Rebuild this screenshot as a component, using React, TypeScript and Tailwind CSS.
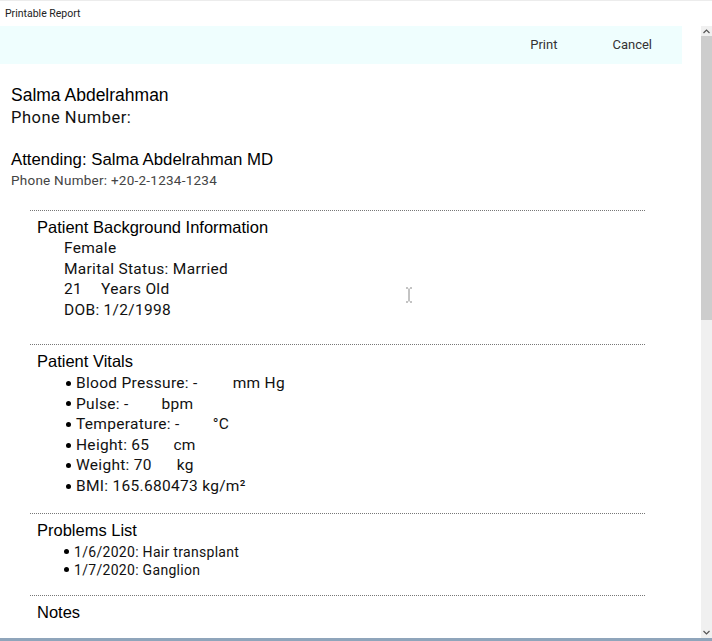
import React from 'react';

const body = { fontFamily: 'Roboto, "Noto Sans", sans-serif' };
const head = { fontFamily: '"Liberation Sans", Arial, sans-serif' };

const Dot: React.FC = () => (
  <span className="inline-block w-[5px] h-[5px] rounded-full bg-black mr-[5px] shrink-0" />
);

const Section: React.FC<{ title: string; className?: string; children?: React.ReactNode }> = ({
  title,
  className,
  children,
}) => (
  <div className={`border-t border-dotted border-[#777] ${className ?? ''}`}>
    <div className="pl-[7px] pt-[6px] text-[16.5px] leading-[21px] text-black" style={head}>
      {title}
    </div>
    {children}
  </div>
);

const App: React.FC = () => {
  const vitals: [string, string, string][] = [
    ['Blood Pressure: -', 'mm Hg', 'ml-[35px]'],
    ['Pulse: -', 'bpm', 'ml-[33px]'],
    ['Temperature: -', '°C', 'ml-[33px]'],
    ['Height: 65', 'cm', 'ml-[24px]'],
    ['Weight: 70', 'kg', 'ml-[25px]'],
  ];

  return (
    <div className="relative w-[712px] h-[641px] overflow-hidden bg-white flex flex-col">
      {/* title bar */}
      <div className="h-[26px] shrink-0 border-t border-[#ececec] flex items-center px-[5px]">
        <span className="text-[10.5px] text-[#222]" style={body}>
          Printable Report
        </span>
      </div>

      <div className="flex flex-1 min-h-0">
        <div className="flex-1 flex flex-col">
          {/* toolbar */}
          <div
            className="h-[38px] mr-[19px] bg-[#effefe] flex items-center justify-end pr-[30px] gap-[55px] text-[13px] text-[#333]"
            style={body}
          >
            <span>Print</span>
            <span>Cancel</span>
          </div>

          {/* report */}
          <div className="pt-[20px] pl-[11px]">
            <div className="text-[17.5px] leading-[22px] text-black" style={head}>
              Salma Abdelrahman
            </div>
            <div className="pt-[1px] text-[16.5px] leading-[22px] tracking-[0.5px] text-[#111]" style={body}>
              Phone Number:
            </div>
            <div className="mt-[20px] text-[16.8px] leading-[22px] text-black" style={head}>
              Attending: Salma Abdelrahman MD
            </div>
            <div className="text-[13.5px] leading-[18px] tracking-[0.25px] text-[#444]" style={body}>
              Phone Number: +20-2-1234-1234
            </div>
          </div>

          <div className="ml-[30px] w-[615px] mt-[21px]">
            <Section title="Patient Background Information" className="pb-[24px]">
              <div className="pl-[34px] text-[15.5px] leading-[20.5px] tracking-[0.3px] text-[#111]" style={body}>
                <div>Female</div>
                <div>Marital Status: Married</div>
                <div>
                  21<span className="ml-[19px]">Years Old</span>
                </div>
                <div>DOB: 1/2/1998</div>
              </div>
            </Section>

            <Section title="Patient Vitals" className="pb-[16px]">
              <div className="mt-[1px] pl-[36px] text-[15.5px] leading-[20.6px] tracking-[0.3px] text-[#111]" style={body}>
                {vitals.map(([label, unit, gap]) => (
                  <div key={label} className="flex items-center">
                    <Dot />
                    <span>{label}</span>
                    <span className={gap}>{unit}</span>
                  </div>
                ))}
                <div className="flex items-center">
                  <Dot />
                  <span>BMI: 165.680473 kg/m²</span>
                </div>
              </div>
            </Section>

            <Section title="Problems List" className="pb-[16px]">
              <div className="mt-[2px] pl-[34px] text-[14px] leading-[18px] tracking-[0.3px] text-[#111]" style={body}>
                <div className="flex items-center">
                  <Dot />
                  <span>1/6/2020: Hair transplant</span>
                </div>
                <div className="flex items-center">
                  <Dot />
                  <span>1/7/2020: Ganglion</span>
                </div>
              </div>
            </Section>

            <Section title="Notes" />
          </div>
        </div>

        {/* scrollbar */}
        <div className="w-[11px] shrink-0 bg-[#f0f0f0] flex flex-col">
          <div className="h-[10px] flex items-center justify-center">
            <svg width="7" height="5" viewBox="0 0 7 5">
              <path d="M0.5 4 L3.5 1 L6.5 4" stroke="#555" strokeWidth="1.2" fill="none" />
            </svg>
          </div>
          <div className="h-[284px] bg-[#cdcdcd]" />
          <div className="flex-1" />
          <div className="h-[12px] flex items-center justify-center">
            <svg width="7" height="5" viewBox="0 0 7 5">
              <path d="M0.5 1 L3.5 4 L6.5 1" stroke="#555" strokeWidth="1.2" fill="none" />
            </svg>
          </div>
        </div>
      </div>

      <div className="h-[3px] shrink-0 bg-[#8fa5bb]" />

      {/* mouse cursor */}
      <svg className="absolute left-[405px] top-[287px]" width="8" height="16" viewBox="0 0 8 16">
        <path d="M1 1 H3 M5 1 H7 M4 1.5 V14.5 M1 15 H3 M5 15 H7" stroke="#888" strokeWidth="1" fill="none" />
      </svg>
    </div>
  );
};

export default App;
